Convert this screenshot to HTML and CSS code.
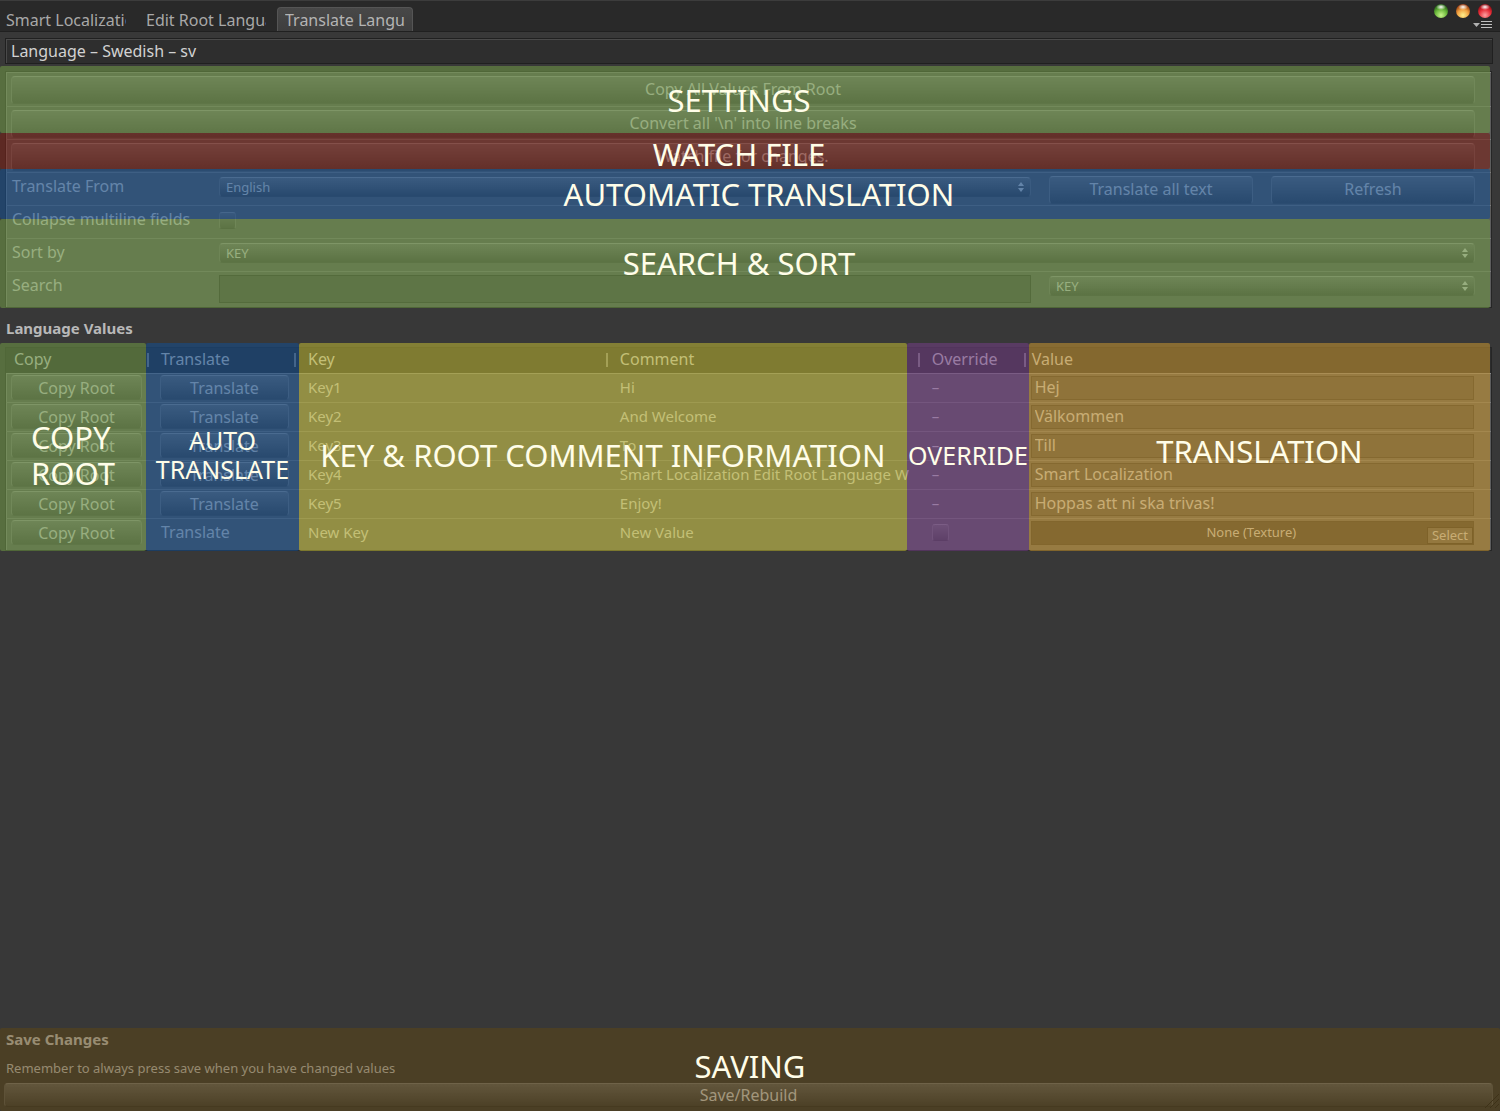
FILE: index.html
```html
<!DOCTYPE html>
<html lang="en">
<head>
<meta charset="utf-8">
<title>Translate Language</title>
<link rel="stylesheet" href="styles.css">
</head>
<body>
<div class="window">
  <header class="tabbar">
    <nav class="tabs">
      <a href="#smart" class="tab"><span>Smart Localization</span></a>
      <a href="#root" class="tab"><span>Edit Root Language</span></a>
      <a href="#translate" class="tab tab-active"><span>Translate Langu</span></a>
    </nav>
    <div class="window-controls">
      <svg width="60" height="18" viewBox="0 0 60 18" aria-hidden="true">
        <defs>
          <radialGradient id="g" cx=".5" cy=".8" r=".75"><stop offset="0" stop-color="#c9f58c"/><stop offset=".55" stop-color="#6cb93c"/><stop offset="1" stop-color="#1f5a12"/></radialGradient>
          <radialGradient id="o" cx=".5" cy=".8" r=".75"><stop offset="0" stop-color="#fff08c"/><stop offset=".55" stop-color="#f0a040"/><stop offset="1" stop-color="#8c3008"/></radialGradient>
          <radialGradient id="r" cx=".5" cy=".8" r=".75"><stop offset="0" stop-color="#ffa0a0"/><stop offset=".55" stop-color="#e8303a"/><stop offset="1" stop-color="#8c0810"/></radialGradient>
          <radialGradient id="shine"><stop offset="0" stop-color="#fff"/><stop offset="1" stop-color="#fff" stop-opacity="0"/></radialGradient>
        </defs>
        <circle cx="8" cy="9" r="7" fill="url(#g)"/><ellipse cx="8" cy="5" rx="5" ry="3" fill="url(#shine)"/>
        <circle cx="30" cy="9" r="7" fill="url(#o)"/><ellipse cx="30" cy="5" rx="5" ry="3" fill="url(#shine)"/>
        <circle cx="52" cy="9" r="7" fill="url(#r)"/><ellipse cx="52" cy="5" rx="5" ry="3" fill="url(#shine)"/>
      </svg>
      <svg width="20" height="8" viewBox="0 0 20 8" aria-hidden="true"><path d="M0 2h7L3.500 6z" fill="#b0b0b0"/><path d="M8 .5h11M8 3.500h11M8 6.500h11" stroke="#c0c0c0"/></svg>
    </div>
  </header>

  <main>
    <h1 class="title">Language – Swedish – sv</h1>

    <section class="panel">
      <div class="box settings">
        <div class="row"><button class="btn wide">Copy All Values From Root</button></div>
        <div class="row"><button class="btn wide">Convert all '\n' into line breaks</button></div>
        <div class="row"><button class="btn wide">Watch file for changes.</button></div>
        <div class="row">
          <label for="from">Translate From</label>
          <div class="select"><select id="from"><option>English</option></select><svg width="6" height="10" viewBox="0 0 6 10"><path d="M3 0l3 4H0zM3 10L0 6h6z"/></svg></div>
          <button class="btn">Translate all text</button>
          <button class="btn">Refresh</button>
        </div>
        <div class="row">
          <label for="collapse">Collapse multiline fields</label>
          <input type="checkbox" class="check" id="collapse">
        </div>
        <div class="row">
          <label for="sort">Sort by</label>
          <div class="select span3"><select id="sort"><option>KEY</option></select><svg width="6" height="10" viewBox="0 0 6 10"><path d="M3 0l3 4H0zM3 10L0 6h6z"/></svg></div>
        </div>
        <div class="row">
          <label for="search">Search</label>
          <input type="text" class="field search" id="search">
          <div class="select span2"><select aria-label="Search in"><option>KEY</option></select><svg width="6" height="10" viewBox="0 0 6 10"><path d="M3 0l3 4H0zM3 10L0 6h6z"/></svg></div>
        </div>
      </div>
      <div class="overlay overlay-settings">
        <div class="zone green"><span>SETTINGS</span></div>
        <div class="zone red"><span>WATCH FILE</span></div>
        <div class="zone blue"><span>AUTOMATIC TRANSLATION</span></div>
        <div class="zone green"><span>SEARCH &amp; SORT</span></div>
      </div>
    </section>

    <h2 class="heading">Language Values</h2>

    <section class="panel values-panel">
      <div class="box values">
        <table>
          <colgroup><col class="c-action"><col class="c-action"><col class="c-text"><col class="c-text"><col class="c-override"><col></colgroup>
          <thead>
            <tr><th>Copy</th><th>Translate</th><th>Key</th><th>Comment</th><th>Override</th><th>Value</th></tr>
          </thead>
          <tbody>
            <tr><td class="act"><button class="btn">Copy Root</button></td><td class="act"><button class="btn">Translate</button></td><td>Key1</td><td>Hi</td><td>–</td><td><input type="text" class="field" aria-label="Key1 value" value="Hej"></td></tr>
            <tr><td class="act"><button class="btn">Copy Root</button></td><td class="act"><button class="btn">Translate</button></td><td>Key2</td><td>And Welcome</td><td>–</td><td><input type="text" class="field" aria-label="Key2 value" value="Välkommen"></td></tr>
            <tr><td class="act"><button class="btn">Copy Root</button></td><td class="act"><button class="btn">Translate</button></td><td>Key3</td><td>To</td><td>–</td><td><input type="text" class="field" aria-label="Key3 value" value="Till"></td></tr>
            <tr><td class="act"><button class="btn">Copy Root</button></td><td class="act"><button class="btn">Translate</button></td><td>Key4</td><td>Smart Localization Edit Root Language W</td><td>–</td><td><input type="text" class="field" aria-label="Key4 value" value="Smart Localization"></td></tr>
            <tr><td class="act"><button class="btn">Copy Root</button></td><td class="act"><button class="btn">Translate</button></td><td>Key5</td><td>Enjoy!</td><td>–</td><td><input type="text" class="field" aria-label="Key5 value" value="Hoppas att ni ska trivas!"></td></tr>
            <tr><td class="act"><button class="btn">Copy Root</button></td><td class="plain">Translate</td><td>New Key</td><td>New Value</td><td><input type="checkbox" class="check" aria-label="Override New Key"></td><td><div class="texture"><span>None (Texture)</span><button class="pick">Select</button></div></td></tr>
          </tbody>
        </table>
      </div>
      <div class="overlay overlay-values">
        <div class="zone green"><span>COPY<br>ROOT</span></div>
        <div class="zone blue small"><span>AUTO<br>TRANSLATE</span></div>
        <div class="zone yellow"><span>KEY &amp; ROOT COMMENT INFORMATION</span></div>
        <div class="zone purple small"><span>OVERRIDE</span></div>
        <div class="zone orange"><span>TRANSLATION</span></div>
      </div>
    </section>
  </main>

  <footer class="saving">
    <h2>Save Changes</h2>
    <p>Remember to always press save when you have changed values</p>
    <button class="btn save">Save/Rebuild</button>
    <svg class="grip" width="14" height="14" viewBox="0 0 14 14" aria-hidden="true"><path d="M0 14L14 0M5 14L14 5M10 14l4-4" stroke="#222" fill="none"/></svg>
    <div class="overlay zone amber"><span>SAVING</span></div>
  </footer>
</div>
</body>
</html>
```
FILE: styles.css
```css
* { box-sizing: border-box; }

body {
  margin: 0;
  background: #383838;
  color: #c8c8c8;
  font: 16px/20px "Noto Sans", "Open Sans", sans-serif;
}

button, input, select { font: inherit; color: inherit; margin: 0; }
h1, h2, p { margin: 0; }

.window {
  display: flex;
  flex-direction: column;
  min-height: 100vh;
}

/* Tab bar */
.tabbar {
  display: flex;
  justify-content: space-between;
  align-items: flex-end;
  height: 32px;
  background: #292929;
  border-top: 1px solid #3c3c3c;
  border-bottom: 1px solid #202020;
}
.tabs { display: flex; gap: 3px; }
.tab {
  width: 136px;
  height: 24px;
  padding: 3px 8px 0;
  color: #a8a8a8;
  text-decoration: none;
}
.tab:first-child { width: 135px; padding-left: 6px; }
.tab span { display: block; width: 120px; overflow: hidden; white-space: nowrap; }
.tab-active {
  background: linear-gradient(#484848, #3e3e3e);
  border: 1px solid #555;
  border-bottom: 0;
  border-radius: 4px 4px 0 0;
  padding: 2px 7px 0;
  color: #b4b4b4;
}
.window-controls {
  display: flex;
  flex-direction: column;
  align-items: flex-end;
  gap: 1px;
  padding: 0 7px 2px 0;
}
.window-controls svg { display: block; }

/* Language title */
.title {
  margin: 6px 7px 0 5px;
  height: 26px;
  padding: 2px 5px;
  border: 1px solid #202020;
  background: #2e2e2e;
  box-shadow: inset 1px 1px #4a4a4a;
  font-size: 16px;
  font-weight: 400;
  color: #d2d2d2;
}

.panel { position: relative; padding: 5px 8px 0 5px; }
.title + .panel { margin-top: 2px; }

.box {
  border: 1px solid #262626;
  background: #5d5d5d;
  box-shadow: inset 1px 1px #808080;
  color: #d8d8d8;
}

/* Settings rows */
.settings { padding-bottom: 2px; }
.row {
  display: grid;
  grid-template-columns: 190fr 812fr 204fr 204fr;
  column-gap: 18px;
  align-items: start;
  height: 33px;
  padding: 3px 16px 0 5px;
  border-bottom: 1px solid #7c7c7c;
}
.row:first-child { height: 35px; padding-top: 4px; }
.row:last-child { border-bottom: 0; }
.row label { padding-left: 1px; white-space: nowrap; }

.btn {
  display: block;
  width: 100%;
  height: 28px;
  padding: 0 0 2px;
  border: 1px solid #787878;
  border-top-color: #989898;
  border-bottom-color: #4c4c4c;
  border-radius: 4px;
  background: linear-gradient(#717171, #464646);
}
.wide { grid-column: 1 / -1; }
.span2 { grid-column: span 2; }
.span3 { grid-column: span 3; }

.select { position: relative; padding-top: 1px; }
.select select {
  display: block;
  appearance: none;
  width: 100%;
  height: 20px;
  padding: 0 6px;
  border: 1px solid #707070;
  border-top-color: #989898;
  border-bottom-color: #484848;
  border-radius: 4px;
  background: linear-gradient(#717171, #444);
  font-size: 13px;
  line-height: 16px;
}
.select svg { position: absolute; right: 7px; top: 6px; fill: #d8d8d8; }

.check {
  appearance: none;
  display: block;
  width: 17px;
  height: 17px;
  margin-top: 3px;
  border: 1px solid #747474;
  border-top-color: #8c8c8c;
  border-bottom-color: #404040;
  border-radius: 3px;
  background: linear-gradient(#6a6a6a, #464646);
}

.field {
  display: block;
  width: 100%;
  height: 24px;
  padding: 0 3px 2px;
  border: 1px solid #303030;
  border-radius: 0;
  background: #4a4a4a;
}
.search { height: 28px; }

/* Language values */
.heading {
  padding: 10px 6px 5px;
  font-size: 15px;
  line-height: 20px;
  color: #b8b8b8;
}
.values-panel { padding-top: 4px; }
.values { padding-bottom: 3px; }
table { width: 100%; table-layout: fixed; border-collapse: collapse; }
.c-action { width: 147px; }
.c-text { width: 21%; }
.c-override { width: 106px; }
th {
  height: 25px;
  padding: 0 8px 2px;
  border-bottom: 1px solid #8a8a8a;
  background:
    linear-gradient(#8a8a8a, #8a8a8a) right 4px center / 2px 14px no-repeat,
    #2d2d2d;
  font-weight: 400;
  line-height: 20px;
  text-align: left;
}
th:last-child { padding-left: 2px; background: #2d2d2d; }
td {
  height: 29px;
  padding: 0 8px 2px;
  border-bottom: 1px solid #7c7c7c;
  overflow: hidden;
  white-space: nowrap;
  font-size: 15px;
}
tr:last-child td { border-bottom: 0; }
.act { padding: 0 11px 0 5px; font-size: 16px; }
.act + .act { padding-left: 7px; }
.plain { font-size: 16px; }
td:last-child { padding: 0 17px 0 1px; font-size: 16px; }
td .btn { height: 25px; padding: 0; }
td .check { margin-top: 2px; }

.texture {
  display: flex;
  justify-content: flex-end;
  align-items: flex-end;
  height: 24px;
  border: 1px solid #2a2a2a;
  background: #303030;
  font-size: 13px;
}
.texture span { flex: 1; padding-left: 44px; line-height: 23px; text-align: center; }
.pick {
  width: 46px;
  height: 17px;
  padding: 0;
  border: 1px solid #202020;
  background: #555;
  line-height: 15px;
}

/* Colour zones drawn over the editor */
.overlay {
  position: absolute;
  inset: 0;
  display: grid;
  pointer-events: none;
  font-size: 31px;
  line-height: 36px;
  color: #fffde8;
}
.overlay-settings {
  right: 10px;
  grid-template-rows: 67fr 36fr 49fr 89fr;
  line-height: 28px;
}
.overlay-values { right: 10px; grid-template-columns: 146fr 153fr 608fr 122fr 461fr; }
.zone {
  display: flex;
  align-items: center;
  justify-content: center;
  white-space: nowrap;
  border-radius: 2px;
}
.green { background: rgba(109, 146, 69, .6); }
.red { background: rgba(118, 31, 22, .6); }
.blue { background: rgba(22, 76, 139, .6); }
.yellow { background: rgba(182, 175, 52, .6); }
.purple { background: rgba(112, 62, 128, .6); }
.orange { background: rgba(190, 143, 48, .6); }

.overlay-settings .zone { padding-right: 12px; }
.overlay-settings .red { padding-top: 6px; }
.overlay-settings .blue { padding: 0 0 0 28px; }
.overlay-values .zone { padding-top: 16px; }
.overlay-values .orange { padding-top: 8px; }
.small { font-size: 25px; line-height: 29px; text-align: center; }

/* Save footer */
.saving {
  position: relative;
  margin-top: auto;
  padding: 1px 7px 4px 4px;
}
.saving h2 { padding-left: 2px; font-size: 15px; line-height: 20px; color: #b8b8b8; }
.saving p { padding: 9px 2px 5px; font-size: 13px; color: #b4b4b4; }
.save {
  height: 24px;
  padding: 0;
  border-color: #585858;
  border-top-color: #747474;
  border-bottom-color: #303030;
  background: linear-gradient(#5e5e5e, #3a3a3a);
}
.grip { position: absolute; right: 1px; bottom: 3px; }
.saving .overlay { display: flex; padding-bottom: 8px; }
.amber { background: rgba(106, 76, 11, .4); }
```
